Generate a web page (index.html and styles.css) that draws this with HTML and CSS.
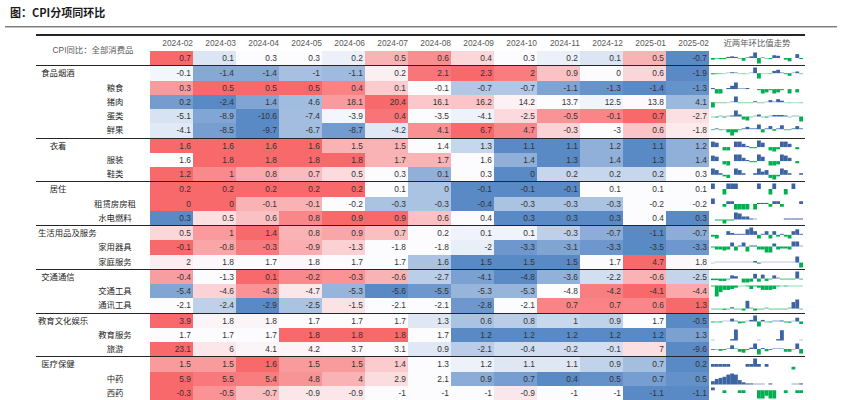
FILE: index.html
```html
<!DOCTYPE html>
<html lang="zh-CN">
<head>
<meta charset="utf-8">
<title>图：CPI分项同环比</title>
<link rel="stylesheet" href="styles.css">
</head>
<body>
<h1 class="title">图：CPI分项同环比</h1>
<div class="rule"></div>
<table class="sheet">
  <colgroup>
    <col class="c-grp"><col class="c-sub">
    <col class="c-val"><col class="c-val"><col class="c-val"><col class="c-val"><col class="c-val"><col class="c-val"><col class="c-val"><col class="c-val"><col class="c-val"><col class="c-val"><col class="c-val"><col class="c-val"><col class="c-val">
    <col class="c-spark">
  </colgroup>
  <thead>
    <tr class="head">
      <th class="cap" colspan="2" rowspan="2">CPI同比：全部消费品</th>
      <th class="h">2024-02</th><th class="h">2024-03</th><th class="h">2024-04</th><th class="h">2024-05</th><th class="h">2024-06</th><th class="h">2024-07</th><th class="h">2024-08</th><th class="h">2024-09</th><th class="h">2024-10</th><th class="h">2024-11</th><th class="h">2024-12</th><th class="h">2025-01</th><th class="h">2025-02</th>
      <th class="h sh">近两年环比值走势</th>
    </tr>
    <tr class="row">
      <td class="v">0.7</td><td class="v">0.1</td><td class="v">0.3</td><td class="v">0.3</td><td class="v">0.2</td><td class="v">0.5</td><td class="v">0.6</td><td class="v">0.4</td><td class="v">0.3</td><td class="v">0.2</td><td class="v">0.1</td><td class="v">0.5</td><td class="v">-0.7</td>
      <td class="sp" data-s="-0.3,-0.1,-0.2,-0.2,0.2,0.3,0.2,-0.1,-0.5,0.1,0.3,1.0,-1.0,0.1,-0.1,-0.2,0.5,0.4,0,-0.3,-0.6,0,0.7,-0.2"></td>
    </tr>
  </thead>
  <tbody>
    <tr class="row grp">
      <td class="g"><span>食品烟酒</span></td><td></td>
      <td class="v">-0.1</td><td class="v">-1.4</td><td class="v">-1.4</td><td class="v">-1</td><td class="v">-1.1</td><td class="v">0.2</td><td class="v">2.1</td><td class="v">2.3</td><td class="v">2</td><td class="v">0.9</td><td class="v">0</td><td class="v">0.6</td><td class="v">-1.9</td>
      <td class="sp" data-s="-0.6,-0.4,-0.3,-0.2,0.1,0.5,0.3,-0.2,-0.3,-0.1,0.1,3.0,-2.8,-0.2,-0.2,-0.3,1.2,1.8,0.3,-0.5,-1.4,0.2,0.9,-0.3"></td>
    </tr>
    <tr class="row">
      <td></td><td class="s">粮食</td>
      <td class="v">0.3</td><td class="v">0.5</td><td class="v">0.5</td><td class="v">0.5</td><td class="v">0.4</td><td class="v">0.1</td><td class="v">-0.1</td><td class="v">-0.7</td><td class="v">-0.7</td><td class="v">-1.1</td><td class="v">-1.3</td><td class="v">-1.4</td><td class="v">-1.3</td>
      <td class="sp" data-s="0.1,-0.4,-0.4,0,0.1,0.3,0.6,0.05,0.05,0.1,0,0,-0.1,-0.4,-0.3,-0.1,-0.4,-0.3,-0.1,0,-0.4,0,-0.3,0"></td>
    </tr>
    <tr class="row">
      <td></td><td class="s">猪肉</td>
      <td class="v">0.2</td><td class="v">-2.4</td><td class="v">1.4</td><td class="v">4.6</td><td class="v">18.1</td><td class="v">20.4</td><td class="v">16.1</td><td class="v">16.2</td><td class="v">14.2</td><td class="v">13.7</td><td class="v">12.5</td><td class="v">13.8</td><td class="v">4.1</td>
      <td class="sp" data-s="-10,-1,-1,-1,-0.5,1,11,-1,-1,-1,-1,2,-1,-1,0.5,4,1,6,3,-0.5,-1,-0.5,-0.5,-1"></td>
    </tr>
    <tr class="row">
      <td></td><td class="s">蛋类</td>
      <td class="v">-5.1</td><td class="v">-8.9</td><td class="v">-10.6</td><td class="v">-7.4</td><td class="v">-3.9</td><td class="v">0.4</td><td class="v">-3.5</td><td class="v">-4.1</td><td class="v">-2.5</td><td class="v">-0.5</td><td class="v">-0.1</td><td class="v">0.7</td><td class="v">-2.7</td>
      <td class="sp" data-s="-0.5,-1,0.5,-1,0.5,1,6,2,-3,-4,-0.5,0.5,2,-0.5,-1,0.5,1.5,1.5,1.5,1,-0.5,0.5,0.5,-5"></td>
    </tr>
    <tr class="row">
      <td></td><td class="s">鲜果</td>
      <td class="v">-4.1</td><td class="v">-8.5</td><td class="v">-9.7</td><td class="v">-6.7</td><td class="v">-8.7</td><td class="v">-4.2</td><td class="v">4.1</td><td class="v">6.7</td><td class="v">4.7</td><td class="v">-0.3</td><td class="v">-3</td><td class="v">0.6</td><td class="v">-1.8</td>
      <td class="sp" data-s="-0.5,0.5,-0.5,-0.3,-2,-4,-2,-0.5,0.5,1.5,0.5,0.5,3,-2,0.5,2,-1,0.5,2.5,-0.5,-0.5,0.5,2,0.5"></td>
    </tr>

    <tr class="row grp">
      <td class="g"><span>衣着</span></td><td></td>
      <td class="v">1.6</td><td class="v">1.6</td><td class="v">1.6</td><td class="v">1.6</td><td class="v">1.5</td><td class="v">1.5</td><td class="v">1.4</td><td class="v">1.3</td><td class="v">1.1</td><td class="v">1.1</td><td class="v">1.2</td><td class="v">1.1</td><td class="v">1.2</td>
      <td class="sp" data-s="0.5,0.4,0,-0.3,-0.3,0,0.5,0.5,0.3,0.1,-0.1,-0.1,0.6,0.4,0,-0.3,-0.4,-0.2,0.5,0.5,0.3,0,-0.2,0"></td>
    </tr>
    <tr class="row">
      <td></td><td class="s">服装</td>
      <td class="v">1.6</td><td class="v">1.8</td><td class="v">1.8</td><td class="v">1.8</td><td class="v">1.8</td><td class="v">1.7</td><td class="v">1.7</td><td class="v">1.6</td><td class="v">1.4</td><td class="v">1.3</td><td class="v">1.4</td><td class="v">1.3</td><td class="v">1.4</td>
      <td class="sp" data-s="0.5,0.4,0,-0.3,-0.4,0,0.6,0.6,0.3,0.1,-0.1,-0.1,0.6,0.4,0,-0.4,-0.4,-0.3,0.6,0.5,0.3,0,-0.2,0"></td>
    </tr>
    <tr class="row">
      <td></td><td class="s">鞋类</td>
      <td class="v">1.2</td><td class="v">1</td><td class="v">0.8</td><td class="v">0.7</td><td class="v">0.5</td><td class="v">0.3</td><td class="v">0.1</td><td class="v">0.3</td><td class="v">0</td><td class="v">0.2</td><td class="v">0.2</td><td class="v">0.2</td><td class="v">0.3</td>
      <td class="sp" data-s="0.4,0.3,0.1,-0.1,-0.2,0,0.4,0.3,0.1,0,0,0.1,0.4,0.2,0.3,-0.2,-0.3,-0.1,0.4,0.3,0.1,0,0,0.1"></td>
    </tr>

    <tr class="row grp">
      <td class="g"><span>居住</span></td><td></td>
      <td class="v">0.2</td><td class="v">0.2</td><td class="v">0.2</td><td class="v">0.2</td><td class="v">0.2</td><td class="v">0.1</td><td class="v">0</td><td class="v">-0.1</td><td class="v">-0.1</td><td class="v">-0.1</td><td class="v">0.1</td><td class="v">0.1</td><td class="v">0.1</td>
      <td class="sp" data-s="0.1,0,0,-0.1,0.1,0.1,0.1,0,0,0,0,0,0.1,0,0,-0.1,0.1,0,0,-0.1,0,0.1,0,0"></td>
    </tr>
    <tr class="row">
      <td></td><td class="s">租赁房房租</td>
      <td class="v">0</td><td class="v">0</td><td class="v">-0.1</td><td class="v">-0.1</td><td class="v">-0.2</td><td class="v">-0.3</td><td class="v">-0.3</td><td class="v">-0.4</td><td class="v">-0.3</td><td class="v">-0.3</td><td class="v">-0.3</td><td class="v">-0.2</td><td class="v">-0.2</td>
      <td class="sp" data-s="0.1,0,0,-0.05,0.05,0.05,-0.1,-0.1,-0.1,-0.1,0,-0.1,0.02,0.02,0.02,-0.05,0.05,0.05,-0.05,0,0,0,0,0.05"></td>
    </tr>
    <tr class="row">
      <td></td><td class="s">水电燃料</td>
      <td class="v">0.3</td><td class="v">0.5</td><td class="v">0.6</td><td class="v">0.8</td><td class="v">0.9</td><td class="v">0.9</td><td class="v">0.6</td><td class="v">0.4</td><td class="v">0.3</td><td class="v">0.3</td><td class="v">0.3</td><td class="v">0.4</td><td class="v">0.3</td>
      <td class="sp" data-s="0,-0.1,-0.1,-0.4,-0.1,-0.1,0.7,0.6,0.3,0.3,0.1,0.05,0,0,0,0,0,0,0,0.1,0.1,0.1,0.1,0.1"></td>
    </tr>

    <tr class="row grp">
      <td class="g"><span>生活用品及服务</span></td><td></td>
      <td class="v">0.5</td><td class="v">1</td><td class="v">1.4</td><td class="v">0.8</td><td class="v">0.9</td><td class="v">0.7</td><td class="v">0.2</td><td class="v">0.1</td><td class="v">0.1</td><td class="v">-0.3</td><td class="v">-0.7</td><td class="v">-1.1</td><td class="v">-0.7</td>
      <td class="sp" data-s="-0.1,-0.2,0,0,0.2,0.1,0.05,0.05,0.05,0.3,0.4,0.2,-0.2,0.05,0.2,-0.2,0.2,-0.1,0.05,-0.1,-0.2,0.2,0.3,0.05"></td>
    </tr>
    <tr class="row">
      <td></td><td class="s">家用器具</td>
      <td class="v">-0.1</td><td class="v">-0.8</td><td class="v">-0.3</td><td class="v">-0.9</td><td class="v">-1.3</td><td class="v">-1.8</td><td class="v">-1.8</td><td class="v">-2</td><td class="v">-3.3</td><td class="v">-3.1</td><td class="v">-3.3</td><td class="v">-3.5</td><td class="v">-3.3</td>
      <td class="sp" data-s="-0.1,-0.3,-0.3,-0.4,-0.3,0.4,-0.4,0.1,0.4,-0.5,0.1,0.1,-0.3,-0.3,-0.6,-0.6,0.3,-0.3,-0.2,-0.2,-0.3,0.5,0.5,0.05"></td>
    </tr>
    <tr class="row">
      <td></td><td class="s">家庭服务</td>
      <td class="v">2</td><td class="v">1.8</td><td class="v">1.7</td><td class="v">1.8</td><td class="v">1.7</td><td class="v">1.7</td><td class="v">1.6</td><td class="v">1.5</td><td class="v">1.5</td><td class="v">1.5</td><td class="v">1.7</td><td class="v">4.7</td><td class="v">1.8</td>
      <td class="sp" data-s="-0.2,0.1,0.1,0.1,0.1,0.1,0.1,0.1,0.1,0.1,0.2,0.8,-0.6,0.1,0.1,0.1,0.1,0.1,0.1,0.1,0.1,0.2,3.3,-2.7"></td>
    </tr>

    <tr class="row grp">
      <td class="g"><span>交通通信</span></td><td></td>
      <td class="v">-0.4</td><td class="v">-1.3</td><td class="v">0.1</td><td class="v">-0.2</td><td class="v">-0.3</td><td class="v">-0.6</td><td class="v">-2.7</td><td class="v">-4.1</td><td class="v">-4.8</td><td class="v">-3.6</td><td class="v">-2.2</td><td class="v">-0.6</td><td class="v">-2.5</td>
      <td class="sp" data-s="-0.2,-0.2,-0.3,-0.3,-0.1,0.4,0.3,0,-0.5,-0.5,-0.4,0.6,-0.4,0.5,-0.3,-0.1,0.4,0.1,-0.1,-0.1,-0.1,-0.1,0.9,-0.1"></td>
    </tr>
    <tr class="row">
      <td></td><td class="s">交通工具</td>
      <td class="v">-5.4</td><td class="v">-4.6</td><td class="v">-4.3</td><td class="v">-4.7</td><td class="v">-5.3</td><td class="v">-5.6</td><td class="v">-5.5</td><td class="v">-5.3</td><td class="v">-5.3</td><td class="v">-4.8</td><td class="v">-4.2</td><td class="v">-4.1</td><td class="v">-4.4</td>
      <td class="sp" data-s="-0.2,-2.5,-1.5,-1,-1,-0.8,-0.5,-0.1,-0.1,-0.2,-0.8,-0.2,-0.5,-1,-1,-1,-0.8,-0.2,-0.1,-0.2,-0.1,-0.1,-0.1,-0.1"></td>
    </tr>
    <tr class="row">
      <td></td><td class="s">通讯工具</td>
      <td class="v">-2.1</td><td class="v">-2.4</td><td class="v">-2.9</td><td class="v">-2.5</td><td class="v">-1.5</td><td class="v">-2.1</td><td class="v">-2.1</td><td class="v">-2.8</td><td class="v">-2.1</td><td class="v">0.7</td><td class="v">0.7</td><td class="v">0.6</td><td class="v">1.3</td>
      <td class="sp" data-s="-0.1,-0.1,-0.1,-0.2,-0.1,0.2,-0.1,-0.1,-0.3,1.2,0.1,-0.3,-0.1,-0.1,0.1,-0.1,-0.1,-0.1,-0.1,-0.1,0.1,1.0,1.4,-0.1"></td>
    </tr>

    <tr class="row grp">
      <td class="g"><span>教育文化娱乐</span></td><td></td>
      <td class="v">3.9</td><td class="v">1.8</td><td class="v">1.8</td><td class="v">1.7</td><td class="v">1.7</td><td class="v">1.7</td><td class="v">1.3</td><td class="v">0.6</td><td class="v">0.8</td><td class="v">1</td><td class="v">0.9</td><td class="v">1.7</td><td class="v">-0.5</td>
      <td class="sp" data-s="-0.3,-0.2,-0.3,0.1,0.1,0.9,0.2,-0.6,-0.4,0.1,0.5,1.9,-1.6,0.5,-0.2,-0.3,0.2,0.2,0.3,-0.3,-0.4,0.1,1.2,-0.8"></td>
    </tr>
    <tr class="row">
      <td></td><td class="s">教育服务</td>
      <td class="v">1.7</td><td class="v">1.7</td><td class="v">1.7</td><td class="v">1.8</td><td class="v">1.8</td><td class="v">1.8</td><td class="v">1.7</td><td class="v">1.2</td><td class="v">1.2</td><td class="v">1.2</td><td class="v">1.2</td><td class="v">1.2</td><td class="v">1.3</td>
      <td class="sp" data-s="0.05,0,0,0,0,0.2,1.6,0,0,0,0,0,0.05,0,0,0,0,0.2,1.5,0,0,0,0,0.05"></td>
    </tr>
    <tr class="row">
      <td></td><td class="s">旅游</td>
      <td class="v">23.1</td><td class="v">6</td><td class="v">4.1</td><td class="v">4.2</td><td class="v">3.7</td><td class="v">3.1</td><td class="v">0.9</td><td class="v">-2.1</td><td class="v">-0.4</td><td class="v">-0.2</td><td class="v">-0.1</td><td class="v">7</td><td class="v">-9.6</td>
      <td class="sp" data-s="-1,-0.5,-2,-1,0.5,4,0.5,-3,-4,-1,1.5,6,-6,1,-2.5,-1,0.5,0.5,0.5,-3,-3,-0.5,6,-5"></td>
    </tr>

    <tr class="row grp">
      <td class="g"><span>医疗保健</span></td><td></td>
      <td class="v">1.5</td><td class="v">1.5</td><td class="v">1.6</td><td class="v">1.5</td><td class="v">1.5</td><td class="v">1.4</td><td class="v">1.3</td><td class="v">1.2</td><td class="v">1.1</td><td class="v">1.1</td><td class="v">0.9</td><td class="v">0.7</td><td class="v">0.2</td>
      <td class="sp" data-s="0.1,0.1,0.1,0.1,0.1,0,0,0,0,0.1,0.1,0.3,0.1,0,0.1,0,0,0,0,0,0,-0.1,0,0"></td>
    </tr>
    <tr class="row">
      <td></td><td class="s">中药</td>
      <td class="v">5.9</td><td class="v">5.5</td><td class="v">5.4</td><td class="v">4.8</td><td class="v">4</td><td class="v">2.9</td><td class="v">2.1</td><td class="v">0.9</td><td class="v">0.7</td><td class="v">0.4</td><td class="v">0.5</td><td class="v">0.7</td><td class="v">0.5</td>
      <td class="sp" data-s="0.3,0.5,0.6,0.7,0.9,1.0,0.9,0.4,0.2,0.1,0.1,0.05,0.05,0.05,0,0.1,0,0,0,0,0,0.05,0.05,0.1"></td>
    </tr>
    <tr class="row">
      <td></td><td class="s">西药</td>
      <td class="v">-0.3</td><td class="v">-0.5</td><td class="v">-0.7</td><td class="v">-0.9</td><td class="v">-0.9</td><td class="v">-1</td><td class="v">-1</td><td class="v">-1</td><td class="v">-0.9</td><td class="v">-1</td><td class="v">-1</td><td class="v">-1.1</td><td class="v">-1.1</td>
      <td class="sp" data-s="0.1,0,0,-0.1,0,0,0,-0.1,-0.1,0,0,0,-0.3,-0.3,-0.2,-0.3,-0.3,0,0,-0.1,0,0,-0.1,-0.1"></td>
    </tr>
  </tbody>
</table>
<script src="script.js"></script>
</body>
</html>
```

FILE: styles.css
```css
body {
  margin: 0;
  background: #ffffff;
  color: #262626;
  font-family: "Liberation Sans", "Noto Sans CJK SC", sans-serif;
}

.title {
  margin: 0;
  padding: 5px 0 0 10px;
  font: 700 11px/14px "Noto Sans CJK SC", sans-serif;
  color: #1a1a1a;
}

.rule {
  margin: 7px 5px 0;
  height: 1px;
  background: #7a7a7a;
  box-shadow: 0 1px 0 #c4c4c4;
}

.sheet {
  table-layout: fixed;
  width: 769px;
  margin: 7px 0 0 36px;
  border-collapse: separate;
  border-spacing: 0;
  border-top: 2px solid #262626;
  font-size: 8.4px;
}

.c-grp { width: 44px; }
.c-sub { width: 70px; }
.c-val { width: 43px; }
.c-spark { width: 96px; }

.sheet th,
.sheet td {
  box-sizing: border-box;
  padding: 0;
  white-space: nowrap;
  background: #ffffff;
  overflow: visible;
}

.sheet th {
  font-weight: 400;
  height: 15px;
  line-height: 15px;
}

.sheet td {
  height: 14.25px;
  line-height: 14.25px;
}

.grp td {
  height: 15.25px;
  border-top: 1px solid #262626;
}

.h {
  text-align: right;
  padding-right: 2px;
  color: #595959;
}

.sheet .sh {
  text-align: center;
  padding-right: 0;
}

.sheet .cap {
  text-align: center;
  vertical-align: middle;
  color: #595959;
}

.sheet .v {
  text-align: right;
  padding-right: 2px;
  color: #333333;
}

.s {
  text-align: center;
}

.sheet .g {
  padding-left: 2px;
  text-align: left;
}

.g span {
  display: inline-block;
  min-width: 40px;
  text-align: center;
}

.sp svg {
  display: block;
}
```

FILE: script.js
```js
(function () {
  var lo = [90, 138, 198], mid = [252, 252, 255], hi = [248, 105, 107];
  function mix(a, b, t) {
    return a.map(function (x, k) { return Math.round(x + (b[k] - x) * t); });
  }
  document.querySelectorAll('.row').forEach(function (row) {
    var cells = Array.prototype.slice.call(row.querySelectorAll('.v'));
    if (!cells.length) return;
    var vals = cells.map(function (c) { return parseFloat(c.textContent); });
    var s = vals.slice().sort(function (a, b) { return a - b; });
    var n = s.length, pos = (n - 1) * 0.5, f = Math.floor(pos), cc = Math.ceil(pos);
    var med = s[f] + (s[cc] - s[f]) * (pos - f);
    var mn = s[0], mx = s[n - 1];
    cells.forEach(function (c, i) {
      var v = vals[i], col;
      if (v <= med) {
        col = mix(lo, mid, med === mn ? 1 : (v - mn) / (med - mn));
      } else {
        col = mix(mid, hi, mx === med ? 0 : (v - med) / (mx - med));
      }
      c.style.backgroundColor = 'rgb(' + col.join(',') + ')';
    });
  });

  var NS = 'http://www.w3.org/2000/svg';
  document.querySelectorAll('.sp[data-s]').forEach(function (el) {
    var v = el.getAttribute('data-s').split(',').map(Number);
    var W = 96, H = 14, n = v.length, bw = (W - 4) / n;
    var mx = Math.max.apply(null, [0].concat(v));
    var mn = Math.min.apply(null, [0].concat(v));
    var range = (mx - mn) || 1, top = 1.5, h = H - 3;
    var y0 = top + h * mx / range;
    var svg = document.createElementNS(NS, 'svg');
    svg.setAttribute('width', W);
    svg.setAttribute('height', H);
    svg.setAttribute('viewBox', '0 0 ' + W + ' ' + H);
    v.forEach(function (x, i) {
      if (!x) return;
      var hh = Math.abs(x) / range * h, op = 1;
      if (hh < 1) { op = Math.max(0.35, hh); hh = 1; }
      var r = document.createElementNS(NS, 'rect');
      r.setAttribute('x', (2 + i * bw).toFixed(2));
      r.setAttribute('y', (x > 0 ? y0 - hh : y0).toFixed(2));
      r.setAttribute('width', bw.toFixed(2));
      r.setAttribute('height', hh.toFixed(2));
      r.setAttribute('fill', x > 0 ? '#3c63a3' : '#00b050');
      r.setAttribute('opacity', op);
      svg.appendChild(r);
    });
    el.appendChild(svg);
  });
})();
```
